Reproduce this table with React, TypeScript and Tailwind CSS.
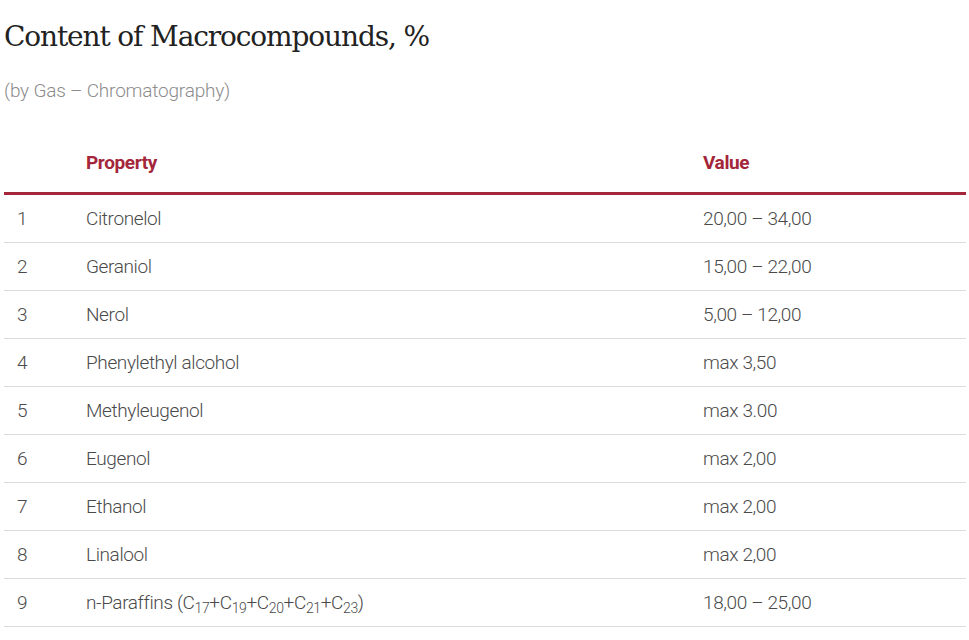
const rows: { n: number; name: React.ReactNode; value: string }[] = [
  { n: 1, name: "Citronelol", value: "20,00 – 34,00" },
  { n: 2, name: "Geraniol", value: "15,00 – 22,00" },
  { n: 3, name: "Nerol", value: "5,00 – 12,00" },
  { n: 4, name: "Phenylethyl alcohol", value: "max 3,50" },
  { n: 5, name: "Methyleugenol", value: "max 3.00" },
  { n: 6, name: "Eugenol", value: "max 2,00" },
  { n: 7, name: "Ethanol", value: "max 2,00" },
  { n: 8, name: "Linalool", value: "max 2,00" },
  {
    n: 9,
    name: (
      <>
        n-Paraffins (C<sub className="text-[14px]">17</sub>+C<sub className="text-[14px]">19</sub>+C
        <sub className="text-[14px]">20</sub>+C<sub className="text-[14px]">21</sub>+C
        <sub className="text-[14px]">23</sub>)
      </>
    ),
    value: "18,00 – 25,00",
  },
];

export default function App() {
  return (
    <div className="w-[969px] h-[640px] bg-white px-[4px] font-['Roboto',sans-serif] text-[#555]">
      <h1 className="h-[72px] flex items-center pt-[2px] font-['DejaVu_Serif',serif] text-[28px] text-[#222] tracking-[-0.04em]">
        Content of Macrocompounds, %
      </h1>
      <p className="h-[38px] flex items-center text-[19px] font-light text-[#8c8c8c] tracking-[-0.01em]">
        (by Gas – Chromatography)
      </p>
      <div className="w-[962px]">
        <div className="grid grid-cols-[82px_617px_1fr] h-[85px] items-center pt-[25px] border-b-[3px] border-[#a3263a] text-[19px] font-bold text-[#a3263a] tracking-[-0.02em]">
          <div />
          <div>Property</div>
          <div>Value</div>
        </div>
        {rows.map((r) => (
          <div
            key={r.n}
            className="grid grid-cols-[82px_617px_1fr] h-[48px] items-center pt-[2px] border-b border-[#dcdcdc] text-[19px] font-light text-[#4a4a4a] tracking-[-0.02em]"
          >
            <div className="pl-[13px]">{r.n}</div>
            <div>{r.name}</div>
            <div>{r.value}</div>
          </div>
        ))}
      </div>
    </div>
  );
}
